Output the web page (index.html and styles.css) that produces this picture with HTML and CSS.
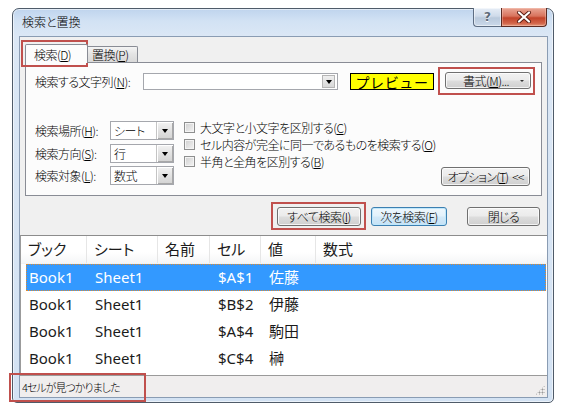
FILE: index.html
```html
<!DOCTYPE html>
<html lang="ja">
<head>
<meta charset="utf-8">
<title>検索と置換</title>
<link rel="stylesheet" href="styles.css">
</head>
<body>
<div class="window">
  <div class="titlebar">
    <span class="title">検索と置換</span>
    <div class="caption">
      <div class="cap-help">?</div>
      <div class="cap-close">
        <svg width="16" height="12" viewBox="0 0 16 12"><path d="M3 1.5 L13 10.5 M13 1.5 L3 10.5" stroke="#5b1d12" stroke-width="4" stroke-linecap="round"/><path d="M3 1.5 L13 10.5 M13 1.5 L3 10.5" stroke="#fff" stroke-width="2.2" stroke-linecap="round"/></svg>
      </div>
    </div>
  </div>
  <div class="client">
    <div class="tabs-area">
      <div class="tabstrip">
        <div class="tab tab-active">検索(<u>D</u>)</div>
        <div class="tab">置換(<u>P</u>)</div>
      </div>
      <div class="panel">
        <div class="find-row">
          <span class="find-label">検索する文字列(<u>N</u>):</span>
          <div class="combo combo-find"><span class="combo-text"></span><span class="drop"><i class="tri"></i></span></div>
          <div class="preview">プレビュー</div>
          <div class="btn btn-format"><span>書式(<u>M</u>)...</span><i class="mini-tri"></i></div>
        </div>
        <div class="opt-row">
          <div class="opt-grid">
            <span class="opt-label">検索場所(<u>H</u>):</span>
            <div class="combo combo-small"><span class="combo-text">シート</span><span class="drop"><i class="tri"></i></span></div>
            <span class="opt-label">検索方向(<u>S</u>):</span>
            <div class="combo combo-small"><span class="combo-text">行</span><span class="drop"><i class="tri"></i></span></div>
            <span class="opt-label">検索対象(<u>L</u>):</span>
            <div class="combo combo-small"><span class="combo-text">数式</span><span class="drop"><i class="tri"></i></span></div>
          </div>
          <div class="checks">
            <label class="check"><i class="box"></i>大文字と小文字を区別する(<u>C</u>)</label>
            <label class="check"><i class="box"></i>セル内容が完全に同一であるものを検索する(<u>O</u>)</label>
            <label class="check"><i class="box"></i>半角と全角を区別する(<u>B</u>)</label>
          </div>
          <div class="btn btn-options">オプション(<u>T</u>)<span class="sp"></span>&lt;&lt;</div>
        </div>
      </div>
    </div>
    <div class="action-row">
      <div class="btn btn-findall">すべて検索(<u>I</u>)</div>
      <div class="btn btn-next">次を検索(<u>F</u>)</div>
      <div class="btn btn-close">閉じる</div>
    </div>
    <div class="list">
      <div class="list-head">
        <span>ブック</span><span>シート</span><span>名前</span><span>セル</span><span>値</span><span>数式</span>
      </div>
      <div class="list-row selected"><span>Book1</span><span>Sheet1</span><span></span><span>$A$1</span><span>佐藤</span><span></span></div>
      <div class="list-row"><span>Book1</span><span>Sheet1</span><span></span><span>$B$2</span><span>伊藤</span><span></span></div>
      <div class="list-row"><span>Book1</span><span>Sheet1</span><span></span><span>$A$4</span><span>駒田</span><span></span></div>
      <div class="list-row"><span>Book1</span><span>Sheet1</span><span></span><span>$C$4</span><span>榊</span><span></span></div>
    </div>
    <div class="status">
      <span>4セルが見つかりました</span>
      <i class="grip"></i>
    </div>
  </div>
</div>
<div class="mark mark-tab"></div>
<div class="mark mark-format"></div>
<div class="mark mark-findall"></div>
<div class="mark mark-status"></div>
</body>
</html>
```
FILE: styles.css
```css
* { box-sizing: border-box; }
body {
  margin: 0;
  width: 562px;
  height: 412px;
  overflow: hidden;
  position: relative;
  background: #fff;
  font-family: "Noto Sans CJK JP", "Noto Sans", sans-serif;
  font-weight: 300;
  font-size: 12px;
  letter-spacing: -0.5px;
  color: #000;
  font-feature-settings: "palt";
}
u { text-decoration: underline; text-underline-offset: 1px; }

.window {
  margin: 8px 0 0 12px;
  width: 542px;
  height: 395px;
  border: 1px solid #4f5b69;
  border-radius: 7px 7px 5px 5px;
  background: linear-gradient(180deg, #bfd4ed 0, #d2e2f4 12px, #dbe7f5 27px, #d3e2f3 100%);
  box-shadow: inset 0 0 0 1px rgba(255,255,255,0.55);
  padding: 0 5px 4px 6px;
  display: flex;
  flex-direction: column;
}
.titlebar {
  flex: none;
  height: 27px;
  display: flex;
  align-items: flex-start;
}
.title {
  padding-left: 3px;
  line-height: 26px;
  font-size: 12px;
  letter-spacing: 0;
  color: #000;
}
.caption {
  margin-left: auto;
  margin-right: 1px;
  margin-top: -1px;
  display: flex;
  height: 19px;
}
.cap-help {
  width: 28px;
  height: 19px;
  border: 1px solid #5d6d83;
  border-top: none;
  border-right: none;
  border-radius: 0 0 0 4px;
  background: linear-gradient(180deg, #e6edf6 0, #cfdbea 45%, #b9c9dc 55%, #cbd9ea 100%);
  box-shadow: inset 0 0 0 1px rgba(255,255,255,0.5);
  text-align: center;
  font-family: "DejaVu Sans", sans-serif;
  font-weight: bold;
  font-size: 12px;
  letter-spacing: 0;
  line-height: 18px;
  color: #5e6a78;
  text-shadow: 0 1px 0 #fff;
}
.cap-close {
  width: 46px;
  height: 19px;
  border: 1px solid #5a2a22;
  border-top: none;
  border-radius: 0 0 4px 0;
  background: linear-gradient(180deg, #e9a695 0, #d8735d 45%, #c2432a 55%, #d2654a 85%, #e59a7c 100%);
  box-shadow: inset 0 0 0 1px rgba(255,220,210,0.35);
  display: flex;
  align-items: center;
  justify-content: center;
}

.client {
  flex: 1;
  border: 1px solid #8a9cb3;
  background: #f0f0f0;
  display: flex;
  flex-direction: column;
  min-height: 0;
}
.tabs-area {
  flex: none;
  padding: 7px 5px 0 5px;
}
.tabstrip {
  height: 18px;
  display: flex;
  align-items: flex-end;
}
.tab {
  height: 16px;
  border: 1px solid #898c95;
  border-bottom: none;
  border-left: none;
  background: linear-gradient(180deg, #f4f4f4, #e3e3e3 50%, #d9d9d9);
  font-size: 12px;
  line-height: 15px;
  white-space: nowrap;
  width: 50px;
  padding-left: 4px;
  border-radius: 0 2px 0 0;
}
.tab-active {
  position: relative;
  z-index: 1;
  height: 19px;
  margin-bottom: -1px;
  width: 63px;
  padding-left: 8px;
  line-height: 19px;
  background: #fcfcfc;
  border-left: 1px solid #898c95;
  border-radius: 2px 2px 0 0;
}
.panel {
  height: 134px;
  border: 1px solid #898c95;
  background: #fcfcfc;
  padding: 9px 10px 0 9px;
  display: flex;
  flex-direction: column;
}
.find-row {
  display: flex;
  align-items: center;
  height: 18px;
}
.find-label {
  width: 108px;
  flex: none;
  white-space: nowrap;
}
.combo {
  height: 17px;
  border: 1px solid #a5a7ad;
  background: #fff;
  display: flex;
  align-items: stretch;
  flex: none;
}
.combo-text {
  flex: 1;
  padding-left: 2px;
  line-height: 15px;
  font-size: 12px;
  white-space: nowrap;
}
.drop {
  width: 15px;
  border-left: 1px solid #c4c4c4;
  background: linear-gradient(180deg, #f3f3f3, #e2e2e2 50%, #d3d3d3);
  box-shadow: inset 1px 1px 0 #fff, inset -1px -1px 0 #a8a8a8;
  display: flex;
  align-items: center;
  justify-content: center;
}
.tri {
  width: 0;
  height: 0;
  border-left: 3.5px solid transparent;
  border-right: 3.5px solid transparent;
  border-top: 4px solid #000;
  margin-top: 1px;
}
.combo-find {
  width: 195px;
  margin-top: 1px;
}
.combo-find .drop {
  width: 13px;
  border-left: none;
  margin: 1px 2px 1px 0;
  background: linear-gradient(180deg, #f1f1f1, #d6d6d6);
  box-shadow: inset 0 0 0 1px #b5b5b5;
}
.preview {
  margin-left: 12px;
  width: 84px;
  height: 17px;
  margin-top: 1px;
  border: 1px solid #000;
  background: #ffff00;
  font-size: 14px;
  font-weight: 400;
  letter-spacing: 0.6px;
  line-height: 16px;
  font-feature-settings: normal;
  text-align: center;
  white-space: nowrap;
}
.btn {
  flex: none;
  border: 1px solid #707070;
  border-radius: 3px;
  background: linear-gradient(180deg, #f2f2f2 0, #ebebeb 48%, #dddddd 52%, #cfcfcf 100%);
  box-shadow: inset 0 0 0 1px rgba(255,255,255,0.75);
  display: flex;
  align-items: center;
  justify-content: center;
  font-size: 12px;
  white-space: nowrap;
  height: 19px;
  line-height: 17px;
}
.btn-format {
  margin-left: 11px;
  width: 86px;
  height: 17px;
  margin-top: -1px;
  position: relative;
}
.btn-format span { margin-left: -4px; }
.mini-tri {
  position: absolute;
  right: 6px;
  top: 7px;
  width: 0;
  height: 0;
  border-left: 2px solid transparent;
  border-right: 2px solid transparent;
  border-top: 2px solid #333;
}
.opt-row {
  margin-top: 31px;
  display: flex;
  align-items: flex-start;
}
.opt-grid {
  display: grid;
  grid-template-columns: 75px 64px;
  grid-template-rows: 19px 19px 19px;
  row-gap: 3.5px;
  align-items: center;
}
.opt-label { white-space: nowrap; line-height: 19px; }
.combo-small { width: 64px; height: 19px; }
.combo-small .combo-text { line-height: 17px; padding-left: 3px; }
.combo-small .drop { width: 17px; }
.checks {
  margin-left: 10px;
  margin-top: -2px;
  display: flex;
  flex-direction: column;
}
.check {
  display: flex;
  align-items: center;
  height: 17px;
  white-space: nowrap;
}
.box {
  width: 11px;
  height: 11px;
  border: 1px solid #8e8f8f;
  background: linear-gradient(135deg, #cfcfcf, #f4f4f4);
  box-shadow: inset 0 0 0 1px #f4f4f4;
  margin-right: 5px;
  flex: none;
}
.btn-options {
  margin-left: auto;
  margin-top: 46px;
  width: 89px;
  height: 19px;
  margin-right: 1px;
  letter-spacing: -0.8px;
}
.sp { display: inline-block; width: 4px; }

.action-row {
  flex: none;
  margin-top: 11px;
  height: 19px;
  display: flex;
  justify-content: flex-end;
  padding-right: 7px;
}
.btn-findall { width: 84px; }
.btn-next {
  width: 76px;
  margin-left: 10px;
  border-color: #3c7fb1;
  background: linear-gradient(180deg, #eef7fd 0, #e2f1fb 48%, #d3e9f8 52%, #c6e2f6 100%);
  box-shadow: inset 0 0 0 1px #bfe7fb;
}
.btn-close { width: 73px; margin-left: 20px; }

.list {
  flex: 1;
  margin-top: 9px;
  border-top: 1px solid #8c8c8c;
  border-left: 1px solid #9b9b9b;
  background: #fff;
  font-family: "Noto Sans", "Noto Sans CJK JP", sans-serif;
  font-weight: 400;
  letter-spacing: 0;
  font-size: 15px;
  color: #1b1b1b;
  min-height: 0;
}
.list-head {
  height: 28px;
  display: grid;
  grid-template-columns: 66px 71px 52px 51px 55px 1fr;
  background: linear-gradient(180deg, #ffffff 0, #ffffff 60%, #f5f6f7 100%);
  border-bottom: 1px solid #f2f2f2;
}
.list-head span {
  padding-left: 7px;
  line-height: 26px;
  border-right: 1px solid #e6e6e6;
  white-space: nowrap;
}
.list-head span:last-child { border-right: none; }
.list-row {
  height: 27px;
  margin: 0 1px 0 5px;
  display: grid;
  grid-template-columns: 61px 71px 52px 51px 55px 1fr;
  border: 1px solid transparent;
}
.list-row span {
  padding-left: 7px;
  line-height: 24px;
  white-space: nowrap;
}
.list-row span:first-child { padding-left: 2px; }
.list-row.selected {
  background: #3399ff;
  color: #fff;
  border: 1px dotted #e08a2e;
}

.status {
  flex: none;
  height: 22px;
  border-top: 1px solid #9a9a9a;
  background: #f0eeee;
  display: flex;
  align-items: center;
  padding-left: 2px;
  font-size: 11px;
  letter-spacing: -1px;
  position: relative;
}
.grip {
  position: absolute;
  right: 2px;
  bottom: 2px;
  width: 10px;
  height: 10px;
  background:
    radial-gradient(circle, #9a9a9a 0.9px, transparent 1.1px) 0 0 / 3px 3px;
  clip-path: polygon(100% 0, 100% 100%, 0 100%);
}

.mark {
  position: absolute;
  border: 2px solid #c0504d;
  pointer-events: none;
}
.mark-tab { left: 21px; top: 40px; width: 67px; height: 27px; }
.mark-format { left: 438px; top: 67px; width: 97px; height: 28px; }
.mark-findall { left: 271px; top: 202px; width: 95px; height: 28px; }
.mark-status { left: 9px; top: 373px; width: 137px; height: 29px; }
```
